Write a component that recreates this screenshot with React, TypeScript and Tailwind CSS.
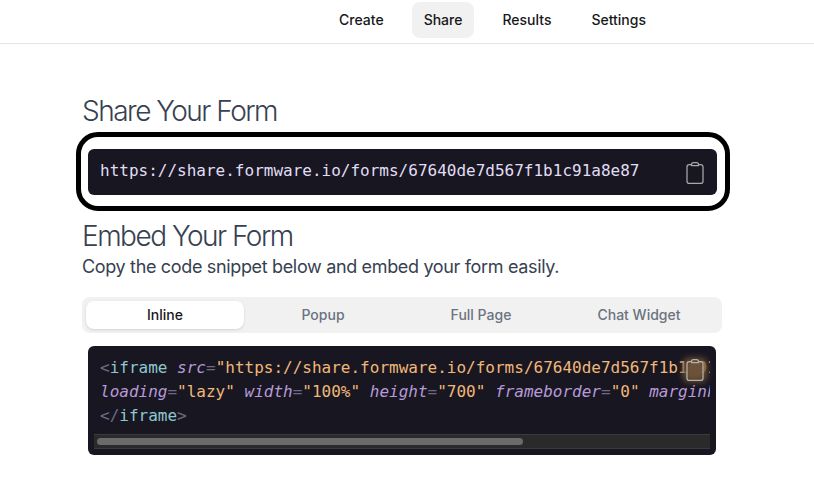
const mono = { fontFamily: '"DejaVu Sans Mono", monospace' };

function Clip({ className }: { className: string }) {
  return (
    <svg className={className} viewBox="0 0 24 24" fill="none" stroke="currentColor" strokeWidth="1.25" strokeLinecap="round" strokeLinejoin="round">
      <path d="M8.500 3.600H6.200C5 3.600 4 4.600 4 5.800v14.400C4 21.400 5 22.400 6.200 22.400h11.600c1.200 0 2.200-1 2.200-2.200V5.800c0-1.200-1-2.200-2.200-2.200h-2.300" />
      <path d="M8.500 3.600C8.500 2.400 9.400 1.600 10.500 1.600h3c1.100 0 2 .8 2 2v.9h-7z" />
    </svg>
  );
}

const Nav = ({ label, active }: { label: string; active?: boolean }) => (
  <div className={active ? "flex h-9 items-center rounded-lg bg-[#f1f1f1] px-3 text-[#18181b]" : "flex h-9 items-center rounded-lg px-3 text-[#18181b]"}>{label}</div>
);

const Tab = ({ label, active }: { label: string; active?: boolean }) => (
  <div className={active ? "flex h-7 flex-1 items-center justify-center rounded-lg bg-white text-[#18181b] shadow-sm" : "flex h-7 flex-1 items-center justify-center text-[#6b7280]"}>{label}</div>
);

export default function App() {
  return (
    <div className="h-[497px] w-[814px] overflow-hidden bg-white text-sm font-medium" style={{ fontFamily: 'Inter, sans-serif' }}>
      <div className="flex h-[44px] items-start justify-end gap-4 border-b border-[#e5e5e5] pt-[2px] pr-[156px]">
        <Nav label="Create" />
        <Nav label="Share" active />
        <Nav label="Results" />
        <Nav label="Settings" />
      </div>
      <div className="ml-[82px] w-[640px]">
        <h1 className="mt-[49px] h-[36px] text-[28px] font-light leading-[36px] tracking-[-1.5px] text-[#374151]">Share Your Form</h1>
        <div className="relative mt-[20px] ml-[6px] flex h-[46px] w-[629px] items-center justify-between rounded-md bg-[#181621] pr-[10px] pl-[12px] text-[16px] font-normal text-[#e0def4]" style={mono}>
          <span className="mb-[2px]">https://share.formware.io/forms/67640de7d567f1b1c91a8e87</span>
          <Clip className="mt-[1px] h-[24px] w-[24px] text-[#a8a8ad]" />
          <div className="absolute top-[-17px] right-[-13px] bottom-[-16px] left-[-12px] rounded-[22px] border-[5px] border-black" />
        </div>
        <h2 className="mt-[23px] h-[36px] text-[28px] font-light leading-[36px] tracking-[-1.5px] text-[#374151]">Embed Your Form</h2>
        <p className="mt-[1px] h-[24px] text-[18px] font-normal leading-[24px] tracking-[-0.34px] text-[#374151]">Copy the code snippet below and embed your form easily.</p>
        <div className="mt-[18px] flex h-[36px] items-center rounded-lg bg-[#f1f1f1] px-[4px]">
          <Tab label="Inline" active />
          <Tab label="Popup" />
          <Tab label="Full Page" />
          <Tab label="Chat Widget" />
        </div>
        <div className="relative mt-[13px] ml-[6px] h-[109px] w-[628px] overflow-hidden rounded-md bg-[#181621] text-[16px] font-normal" style={mono}>
          <div className="h-[88px] w-[622px] overflow-hidden whitespace-pre pt-[10px] pl-[12px] leading-[24px] text-[#6e6a86]">
            <div>
              {"<"}<span className="text-[#8fc7cf]">iframe</span> <em className="text-[#b79ad8]">src</em>=<span className="text-[#f0b878]">"https://share.formware.io/forms/67640de7d567f1b1c91a8e87"</span>
            </div>
            <div>
              <em className="text-[#b79ad8]">loading</em>=<span className="text-[#f0b878]">"lazy"</span> <em className="text-[#b79ad8]">width</em>=<span className="text-[#f0b878]">"100%"</span> <em className="text-[#b79ad8]">height</em>=<span className="text-[#f0b878]">"700"</span> <em className="text-[#b79ad8]">frameborder</em>=<span className="text-[#f0b878]">"0"</span> <em className="text-[#b79ad8]">marginheight</em>=<span className="text-[#f0b878]">"0"</span>
            </div>
            <div>
              {"</"}<span className="text-[#8fc7cf]">iframe</span>{">"}
            </div>
          </div>
          <div className="ml-[6px] h-[15px] w-[616px] border-y border-[#3a3a3a] bg-[#2a2a2a] px-[3px] py-[3px]">
            <div className="h-[7px] w-[426px] rounded-full bg-[#6b6b6b]" />
          </div>
          <div className="absolute top-[12px] right-[9px] h-[24px] w-[24px]">
            <div className="absolute inset-0 rounded-md bg-[#6b5238] blur-[3px]" />
            <Clip className="relative h-[24px] w-[24px] text-[#b5b0aa]" />
          </div>
        </div>
      </div>
    </div>
  );
}
